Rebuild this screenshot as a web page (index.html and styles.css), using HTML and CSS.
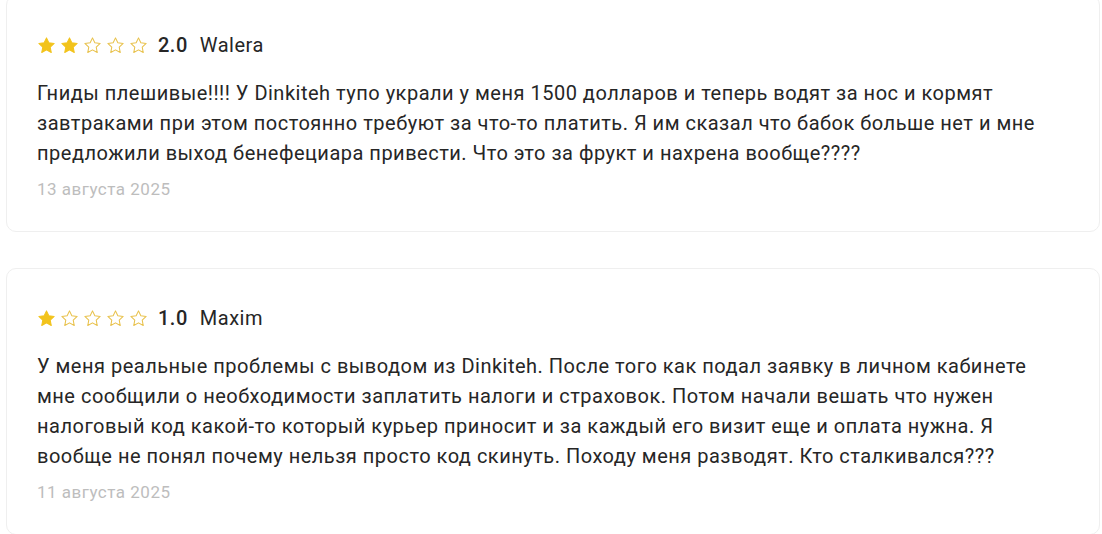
FILE: index.html
```html
<!DOCTYPE html>
<html lang="ru">
<head>
    <meta charset="UTF-8">
    <meta name="viewport" content="width=device-width, initial-scale=1.0">
    <title>Отзывы</title>
    <link rel="stylesheet" href="styles.css">
</head>
<body>
    <svg width="0" height="0" style="position:absolute">
        <defs>
            <path id="star" d="M12 2.4l2.95 6.2 6.75.85-5 4.7 1.3 6.75L12 17.55l-6 3.35 1.3-6.75-5-4.7 6.75-.85z"/>
        </defs>
    </svg>

    <div class="reviews">
        <div class="review-card">
            <div class="review-head">
                <div class="stars">
                    <svg class="star full" viewBox="0 0 24 24"><use href="#star"/></svg>
                    <svg class="star full" viewBox="0 0 24 24"><use href="#star"/></svg>
                    <svg class="star" viewBox="0 0 24 24"><use href="#star"/></svg>
                    <svg class="star" viewBox="0 0 24 24"><use href="#star"/></svg>
                    <svg class="star" viewBox="0 0 24 24"><use href="#star"/></svg>
                </div>
                <span class="rating">2.0</span>
                <span class="author">Walera</span>
            </div>
            <p class="review-text">Гниды плешивые!!!! У Dinkiteh тупо украли у меня 1500 долларов и теперь водят за нос и кормят завтраками при этом постоянно требуют за что-то платить. Я им сказал что бабок больше нет и мне предложили выход бенефециара привести. Что это за фрукт и нахрена вообще????</p>
            <div class="review-date">13 августа 2025</div>
        </div>

        <div class="review-card">
            <div class="review-head">
                <div class="stars">
                    <svg class="star full" viewBox="0 0 24 24"><use href="#star"/></svg>
                    <svg class="star" viewBox="0 0 24 24"><use href="#star"/></svg>
                    <svg class="star" viewBox="0 0 24 24"><use href="#star"/></svg>
                    <svg class="star" viewBox="0 0 24 24"><use href="#star"/></svg>
                    <svg class="star" viewBox="0 0 24 24"><use href="#star"/></svg>
                </div>
                <span class="rating">1.0</span>
                <span class="author">Maxim</span>
            </div>
            <p class="review-text">У меня реальные проблемы с выводом из Dinkiteh. После того как подал заявку в личном кабинете мне сообщили о необходимости заплатить налоги и страховок. Потом начали вешать что нужен налоговый код какой-то который курьер приносит и за каждый его визит еще и оплата нужна. Я вообще не понял почему нельзя просто код скинуть. Походу меня разводят. Кто сталкивался???</p>
            <div class="review-date">11 августа 2025</div>
        </div>
    </div>
</body>
</html>
```

FILE: styles.css
```css
* {
    margin: 0;
    padding: 0;
    box-sizing: border-box;
}

body {
    background: #ffffff;
    font-family: 'Roboto', 'Liberation Sans', sans-serif;
    color: #262626;
    overflow: hidden;
}

.reviews {
    display: flex;
    flex-direction: column;
    gap: 36px;
    margin-top: -5px;
    padding: 0 2px 0 6px;
}

.review-card {
    background: #ffffff;
    border: 1px solid #efefef;
    border-radius: 10px;
    padding: 37px 30px 30px 30px;
}

.review-head {
    display: flex;
    align-items: center;
    height: 24px;
}

.stars {
    display: flex;
    gap: 4px;
}

.star {
    width: 19px;
    height: 19px;
    fill: none;
    stroke: #e8c14a;
    stroke-width: 1.3;
    stroke-linejoin: round;
}

.star.full {
    fill: #f2c31c;
    stroke: #f2c31c;
}

.rating {
    font-size: 20px;
    font-weight: 500;
    letter-spacing: 0.5px;
    color: #262626;
    margin-left: 10px;
}

.author {
    font-size: 20px;
    letter-spacing: 0.5px;
    color: #262626;
    margin-left: 12px;
}

.review-text {
    margin-top: 21px;
    font-size: 20px;
    line-height: 30px;
    letter-spacing: 0.5px;
    color: #262626;
}

.review-date {
    margin-top: 9px;
    font-size: 17px;
    line-height: 24px;
    letter-spacing: 0.5px;
    color: #bdbdbd;
}
```
